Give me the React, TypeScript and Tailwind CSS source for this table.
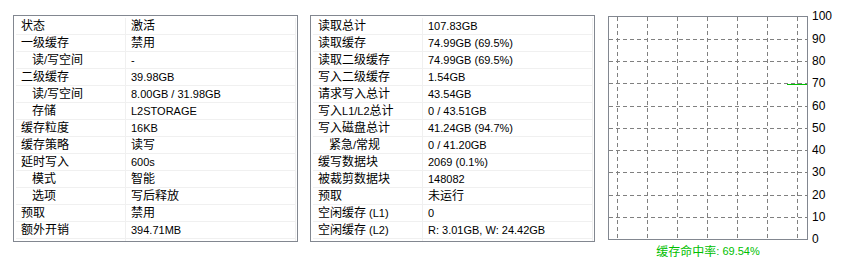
import React from 'react';

type Row = [string, string, boolean?];

const LEFT: Row[] = [
  ['状态', '激活'],
  ['一级缓存', '禁用'],
  ['读/写空间', '-', true],
  ['二级缓存', '39.98GB'],
  ['读/写空间', '8.00GB / 31.98GB', true],
  ['存储', 'L2STORAGE', true],
  ['缓存粒度', '16KB'],
  ['缓存策略', '读写'],
  ['延时写入', '600s'],
  ['模式', '智能', true],
  ['选项', '写后释放', true],
  ['预取', '禁用'],
  ['额外开销', '394.71MB'],
];

const RIGHT: Row[] = [
  ['读取总计', '107.83GB'],
  ['读取缓存', '74.99GB (69.5%)'],
  ['读取二级缓存', '74.99GB (69.5%)'],
  ['写入二级缓存', '1.54GB'],
  ['请求写入总计', '43.54GB'],
  ['写入L1/L2总计', '0 / 43.51GB'],
  ['写入磁盘总计', '41.24GB (94.7%)'],
  ['紧急/常规', '0 / 41.20GB', true],
  ['缓写数据块', '2069 (0.1%)'],
  ['被裁剪数据块', '148082'],
  ['预取', '未运行'],
  ['空闲缓存 (L1)', '0'],
  ['空闲缓存 (L2)', 'R: 3.01GB, W: 24.42GB'],
];

// CJK runs at 12px, latin runs at 11px (like the original dialog font)
const Txt: React.FC<{ s: string }> = ({ s }) => {
  const parts = s.split(/([\u4e00-\u9fff]+)/).filter(Boolean);
  return (
    <>
      {parts.map((p, i) =>
        /[\u4e00-\u9fff]/.test(p) ? (
          <span key={i} className="text-[12px] leading-none">{p}</span>
        ) : (
          <span key={i} className="text-[11px] leading-none whitespace-pre">{p}</span>
        )
      )}
    </>
  );
};

const Table: React.FC<{ rows: Row[]; className?: string }> = ({ rows, className }) => (
  <div className={`w-[285px] h-[227px] border border-[#828790] pt-[2px] pl-[2px] pr-[1px] flex flex-col ${className ?? ''}`}>
    {rows.map(([k, v, sub], i) => (
      <div key={i} className="flex h-[17px] border-b border-[#f0f0f0] text-black">
        <div className={`w-[110px] border-r border-[#f0f0f0] flex items-center ${sub ? 'pl-[16px]' : 'pl-[5px]'}`}>
          <Txt s={k} />
        </div>
        <div className="flex-1 border-r border-[#f0f0f0] flex items-center pl-[5px]">
          <Txt s={v} />
        </div>
      </div>
    ))}
    <div className="flex flex-1">
      <div className="w-[110px] border-r border-[#f0f0f0]" />
      <div className="flex-1 border-r border-[#f0f0f0]" />
    </div>
  </div>
);

const HitChart: React.FC = () => {
  const bottom = 231;
  const step = 22.25;
  const ys = Array.from({ length: 11 }, (_, k) => bottom - k * step);
  const xs = [9, 39, 69, 99, 129, 159, 189];
  const hit = 69.54;
  const hy = Math.round(bottom - (hit / 100) * (step * 10)) + 0.5;
  return (
    <svg width={233} height={237} className="block">
      {xs.map((x) => (
        <line key={x} x1={x + 0.5} y1={9} x2={x + 0.5} y2={231} stroke="#808080" strokeDasharray="4 3" />
      ))}
      {ys.slice(1, 10).map((y, i) => (
        <line key={i} x1={1} y1={Math.round(y) + 0.5} x2={199} y2={Math.round(y) + 0.5} stroke="#808080" strokeDasharray="4 3" />
      ))}
      <rect x={0.5} y={8.5} width={199} height={223} fill="none" stroke="#828790" />
      <line x1={179} y1={hy} x2={199} y2={hy} stroke="#00c000" />
      {ys.map((y, k) => (
        <text
          key={k}
          x={204}
          y={k === 10 ? 8 : y}
          dominantBaseline="central"
          fontSize={12}
          fontFamily="'Liberation Sans', Arial, sans-serif"
          fill="#000"
        >
          {k * 10}
        </text>
      ))}
    </svg>
  );
};

const App: React.FC = () => {
  return (
    <div className="w-[841px] h-[260px] bg-white flex items-start pl-[13px] pt-[8px] font-['Liberation_Sans','Noto_Sans_CJK_SC',sans-serif] overflow-hidden">
      <Table rows={LEFT} className="mt-[7px]" />
      <Table rows={RIGHT} className="mt-[7px] ml-[12px]" />
      <div className="ml-[13px] flex flex-col">
        <HitChart />
        <div className="w-[200px] h-[13px] flex items-center justify-center text-[#00c000]">
          <Txt s="缓存命中率: 69.54%" />
        </div>
      </div>
    </div>
  );
};

export default App;
